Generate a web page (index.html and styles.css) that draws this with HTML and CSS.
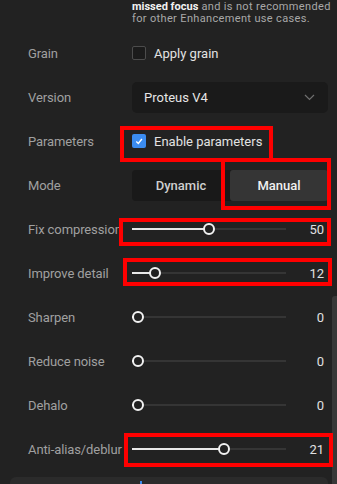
FILE: index.html
```html
<!DOCTYPE html>
<html lang="en">
<head>
  <meta charset="UTF-8" />
  <title>Enhancement settings</title>
  <link rel="stylesheet" href="styles.css">
</head>
<body>
  <div class="panel">
    <p class="note"><b>missed focus</b> and is not recommended<br>for other Enhancement use cases.</p>

    <div class="row">
      <span class="label">Grain</span>
      <label class="check"><span class="box"></span>Apply grain</label>
    </div>

    <div class="row">
      <span class="label">Version</span>
      <div class="select">
        <span>Proteus V4</span>
        <svg width="11" height="7" viewBox="0 0 11 7"><path d="M1 1l4.5 4.5L10 1" fill="none" stroke="#6f6f6f" stroke-width="1.2"/></svg>
      </div>
    </div>

    <div class="row">
      <span class="label">Parameters</span>
      <label class="check">
        <span class="box on"><svg width="14" height="14" viewBox="0 0 14 14"><path d="M4.3 7.4l2 2 3.6-4.4" fill="none" stroke="#fff" stroke-width="1.4"/></svg></span>
        Enable parameters
      </label>
    </div>

    <div class="row">
      <span class="label">Mode</span>
      <div class="segmented">
        <span class="seg">Dynamic</span>
        <span class="seg active">Manual</span>
      </div>
    </div>

    <div class="row">
      <span class="label">Fix compression</span>
      <div class="slider"><div class="track" style="--p:0.5"><div class="fill"></div><div class="thumb"></div></div><span class="value">50</span></div>
    </div>

    <div class="row">
      <span class="label">Improve detail</span>
      <div class="slider"><div class="track" style="--p:0.12"><div class="fill"></div><div class="thumb"></div></div><span class="value">12</span></div>
    </div>

    <div class="row">
      <span class="label">Sharpen</span>
      <div class="slider"><div class="track" style="--p:0"><div class="fill"></div><div class="thumb"></div></div><span class="value">0</span></div>
    </div>

    <div class="row">
      <span class="label">Reduce noise</span>
      <div class="slider"><div class="track" style="--p:0"><div class="fill"></div><div class="thumb"></div></div><span class="value">0</span></div>
    </div>

    <div class="row">
      <span class="label">Dehalo</span>
      <div class="slider"><div class="track" style="--p:0"><div class="fill"></div><div class="thumb"></div></div><span class="value">0</span></div>
    </div>

    <div class="row">
      <span class="label">Anti-alias/deblur</span>
      <div class="slider"><div class="track" style="--p:0.606"><div class="fill"></div><div class="thumb"></div></div><span class="value">21</span></div>
    </div>

    <div class="card"><span class="card-dot"></span></div>
  </div>

  <div class="scrollbar"></div>

  <!-- annotation boxes -->
  <div class="mark mark-params"></div>
  <div class="mark mark-manual"></div>
  <div class="mark mark-fix"></div>
  <div class="mark mark-detail"></div>
  <div class="mark mark-alias"></div>
</body>
</html>
```

FILE: styles.css
```css
* {
  box-sizing: border-box;
}

html, body {
  margin: 0;
  height: 100%;
  overflow: hidden;
}

body {
  background: #222222;
  font-family: Roboto, "Liberation Sans", sans-serif;
  font-size: 13px;
  color: #a3a3a3;
  position: relative;
}

.panel {
  padding-left: 28px;
}

.note {
  margin: 1px 0 6px 104px;
  font-size: 11px;
  line-height: 12px;
  letter-spacing: 0.35px;
  white-space: nowrap;
  color: #a8a8a8;
}

.note b {
  color: #f2f2f2;
  font-weight: 700;
  letter-spacing: 0;
}

.row {
  display: grid;
  grid-template-columns: 104px 196px;
  align-items: center;
  height: 44px;
}

.label {
  color: #a0a0a0;
  white-space: nowrap;
  letter-spacing: -0.1px;
}

.check {
  display: flex;
  align-items: center;
  gap: 8px;
  color: #e2e2e2;
}

.box {
  width: 14px;
  height: 14px;
  border: 1px solid #4c4c4c;
  background: #1b1b1b;
  border-radius: 2px;
  display: flex;
}

.box.on {
  border: none;
  background: #3b8cf0;
}

.select {
  height: 31px;
  background: #1a1a1a;
  border-radius: 5px;
  display: flex;
  align-items: center;
  justify-content: space-between;
  padding: 0 13px 0 12px;
  color: #e6e6e6;
}

.segmented {
  height: 31px;
  background: #191919;
  border-radius: 4px;
  display: flex;
}

.seg {
  flex: 1;
  display: flex;
  align-items: center;
  justify-content: center;
  color: #cfcfcf;
  font-weight: 500;
  border-radius: 3px;
}

.seg.active {
  background: #353535;
  color: #f0f0f0;
}

.slider {
  display: flex;
  align-items: center;
}

.track {
  position: relative;
  width: 154px;
  height: 2px;
  background: #353535;
}

.fill {
  height: 2px;
  width: calc(6px + var(--p) * (100% - 12px));
  background: #e8e8e8;
}

.thumb {
  position: absolute;
  top: -5px;
  left: calc(var(--p) * (100% - 12px));
  width: 12px;
  height: 12px;
  border: 2px solid #f2f2f2;
  border-radius: 50%;
  background: #222;
}

.value {
  flex: 1;
  text-align: right;
  padding-right: 4px;
  color: #e0e0e0;
}

.card {
  margin: 6px 0 0 -18px;
  width: 318px;
  height: 40px;
  background: #2b2b2b;
  border-radius: 6px;
  position: relative;
}

.card-dot {
  position: absolute;
  left: 130px;
  top: 4px;
  width: 2px;
  height: 4px;
  background: #3b8cf0;
}

.scrollbar {
  position: absolute;
  right: 0;
  top: 296px;
  width: 5px;
  height: 200px;
  background: #383838;
  border-radius: 3px 0 0 0;
}

.mark {
  position: absolute;
  border: 4px solid #ff0000;
}

.mark-params { left: 120px; top: 126px; width: 153px; height: 36px; }
.mark-manual { left: 221px; top: 158px; width: 110px; height: 52px; }
.mark-fix { left: 119px; top: 218px; width: 212px; height: 28px; }
.mark-detail { left: 123px; top: 258px; width: 209px; height: 28px; }
.mark-alias { left: 124px; top: 433px; width: 209px; height: 34px; }
```
